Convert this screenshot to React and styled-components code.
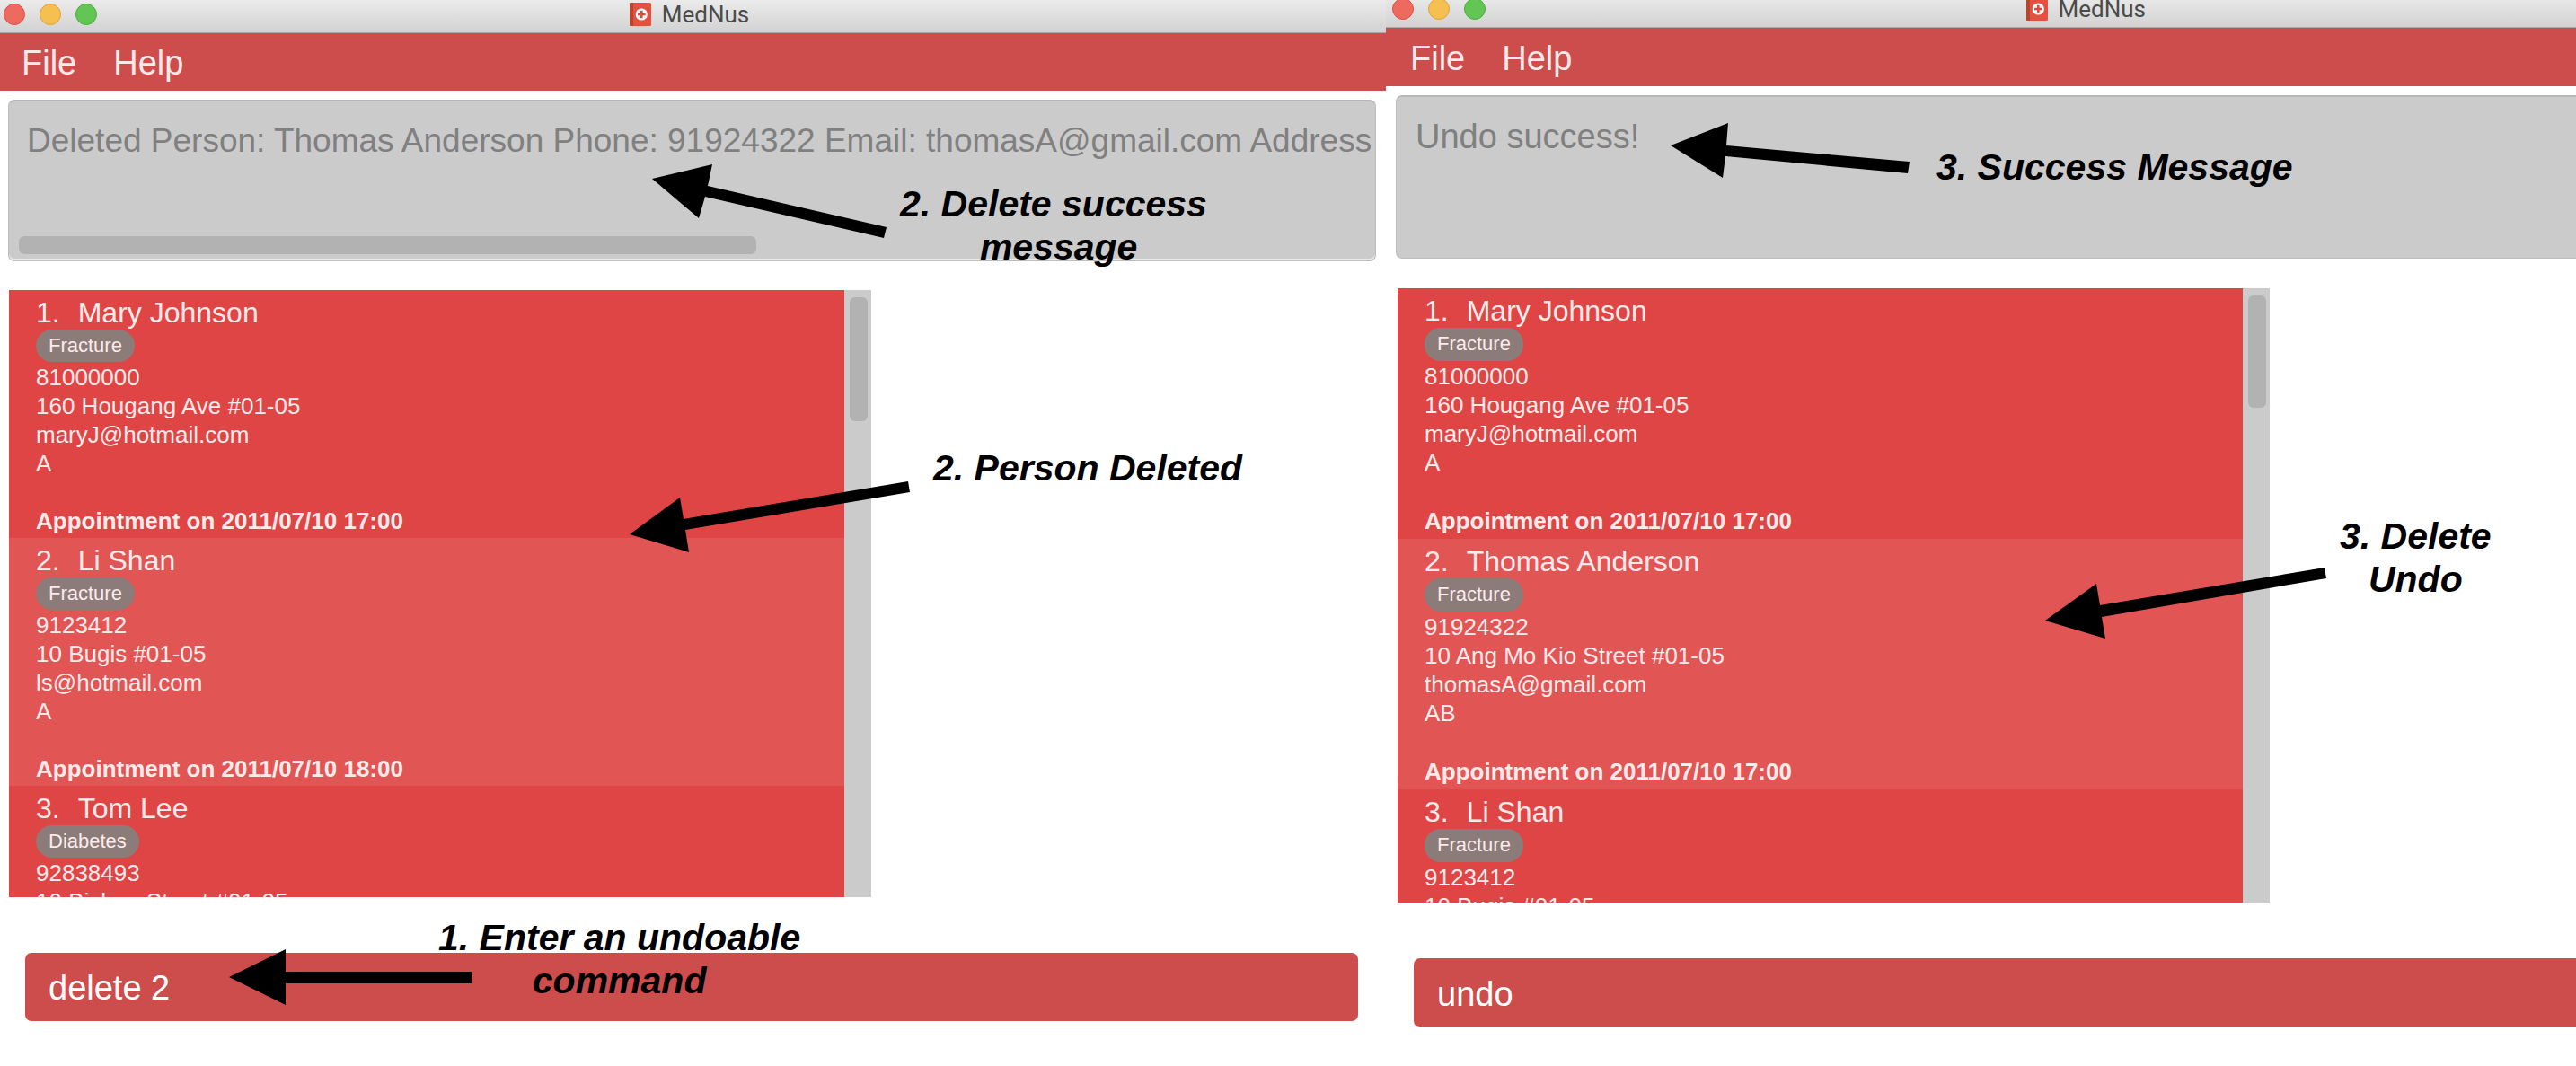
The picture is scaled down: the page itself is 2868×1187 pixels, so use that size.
import React from 'react';
import styled, { createGlobalStyle } from 'styled-components';

const GlobalStyle = createGlobalStyle`
  *, *::before, *::after { box-sizing: border-box; }
  body {
    margin: 0;
    background: #fff;
    font-family: 'Liberation Sans', Arial, Helvetica, sans-serif;
  }
  p, ol { margin: 0; padding: 0; }
`;

const Page = styled.main`
  position: relative;
  display: grid;
  grid-template-columns: minmax(0, 1543fr) minmax(0, 1325fr);
  height: 100vh;
  overflow: hidden;
`;

const Window = styled.section`
  display: flex;
  flex-direction: column;
  min-height: 0;
  width: ${(p) => (p.$cropped ? '118%' : '100%')};
  margin-top: ${(p) => (p.$cropped ? '-6px' : '0')};
  padding-bottom: ${(p) => (p.$cropped ? '43px' : '50px')};
`;

const TitleBar = styled.header`
  flex: none;
  display: grid;
  grid-template-columns: 1fr auto 1fr;
  align-items: center;
  height: 37px;
  padding: 0 12px 5px ${(p) => (p.$cropped ? '7px' : '4px')};
  border-bottom: 1px solid #a9a9a9;
  background: linear-gradient(#ebebeb, #d2d2d2);
`;

const Lights = styled.div`
  display: flex;
  gap: 16px;
`;

const Light = styled.button`
  width: 24px;
  height: 24px;
  padding: 0;
  border: 1px solid ${(p) => p.$edge};
  border-radius: 50%;
  background: ${(p) => p.$fill};
`;

const Title = styled.div`
  display: flex;
  align-items: center;
  gap: 12px;
  font: 26px/30px Roboto, sans-serif;
  color: #4b4b4b;
`;

const MenuBar = styled.nav`
  flex: none;
  display: flex;
  align-items: center;
  gap: 41px;
  height: ${(p) => (p.$cropped ? '65px' : '64px')};
  padding: 2px 0 0 ${(p) => (p.$cropped ? '27px' : '24px')};
  background: #cd4d4c;
`;

const MenuButton = styled.button`
  padding: 0;
  border: 0;
  background: none;
  color: #fbe9e9;
  font: inherit;
  font-size: 38px;
  line-height: 44px;
`;

const Result = styled.div`
  flex: none;
  display: flex;
  flex-direction: column;
  height: ${(p) => (p.$cropped ? '182px' : '180px')};
  margin: 10px 11px 0 ${(p) => (p.$cropped ? '11px' : '9px')};
  padding: 22px 0 7px;
  border: 1px solid #bdbdbd;
  border-top: 2px solid #b7b7b7;
  border-radius: 7px;
  background: #cbcbcb;
  box-shadow: ${(p) => (p.$cropped ? 'none' : 'inset 0 -2px 0 #e8e8e8')};
`;

const ResultText = styled.textarea`
  flex: 1;
  min-height: 0;
  width: 100%;
  padding: 0 0 0 ${(p) => (p.$cropped ? '21px' : '20px')};
  border: 0;
  outline: 0;
  resize: none;
  overflow: hidden;
  white-space: pre;
  background: transparent;
  color: #808080;
  font: inherit;
  font-size: ${(p) => (p.$cropped ? '38px' : '37px')};
  line-height: 44px;
`;

const HorizontalThumb = styled.div`
  flex: none;
  width: 54%;
  height: 20px;
  margin-left: 11px;
  border-radius: 6px;
  background: #b2b2b2;
`;

const PersonPanel = styled.div`
  flex: 1;
  display: flex;
  min-height: 0;
  width: ${(p) => (p.$cropped ? '62.1%' : '62.2%')};
  margin: ${(p) => (p.$cropped ? '33px 0 0 13px' : '32px 0 0 10px')};
`;

const PersonList = styled.ol`
  flex: 1;
  overflow: hidden;
  list-style: none;
  background: #df4544;
  color: #fdeaea;
`;

const ScrollTrack = styled.div`
  flex: none;
  width: 30px;
  padding: 8px 4px 0 6px;
  background: #cbcbcb;
`;

const ScrollThumb = styled.div`
  height: ${(p) => (p.$cropped ? '125px' : '138px')};
  border-radius: 6px;
  background: #b2b2b2;
`;

const Card = styled.li`
  display: flex;
  flex-direction: column;
  align-items: flex-start;
  padding: 7px 0 ${(p) => (p.$cropped ? '4px' : '3px')} 30px;
  font-size: 26px;
  line-height: 32px;

  &:nth-child(even) { background: #e15554; }
`;

const Name = styled.div`
  display: flex;
  gap: 20px;
  font-size: 32px;
  line-height: 36px;
`;

const Tag = styled.span`
  height: ${(p) => (p.$cropped ? '37px' : '36px')};
  margin: 1px 0;
  padding: 0 14px;
  border-radius: 18px;
  background: #8b7c7a;
  font-size: 22px;
  line-height: 36px;
`;

const Appointment = styled.p`
  margin-top: ${(p) => (p.$cropped ? '33px' : '32px')};
  font-weight: bold;
`;

const CommandInput = styled.input`
  flex: none;
  height: ${(p) => (p.$cropped ? '77px' : '76px')};
  margin: 62px 31px 0 ${(p) => (p.$cropped ? '31px' : '28px')};
  padding: 3px 26px 0;
  border: 0;
  outline: 0;
  border-radius: 7px;
  background: #cd4d4c;
  color: #fff;
  font: inherit;
  font-size: 38px;
`;

const Caption = styled.p`
  position: absolute;
  left: ${(p) => p.$x}px;
  top: ${(p) => p.$y}px;
  color: #000;
  font-size: 41px;
  font-style: italic;
  font-weight: bold;
  line-height: 48px;
  text-align: center;
  white-space: pre;
`;

const ArrowLayer = styled.svg`
  position: absolute;
  left: 0;
  top: 0;
  pointer-events: none;
`;

function AppIcon() {
  return (
    <svg width="24" height="26" viewBox="0 0 24 26" aria-hidden="true">
      <rect width="24" height="26" rx="1.5" fill="#e55140" />
      <path d="M1.5 0H4v26H1.5A1.5 1.5 0 0 1 0 24.500V1.500A1.5 1.500 0 0 1 1.500 0z" fill="#b8452c" />
      <circle cx="13.300" cy="13" r="6.600" fill="#fff" />
      <path d="M13.300 8.700v8.600M9 13h8.600" stroke="#e04a39" strokeWidth="2.600" />
    </svg>
  );
}

function AppWindow({ cropped, message, scrollable, people, command, name }) {
  return (
    <Window $cropped={cropped}>
      <TitleBar $cropped={cropped}>
        <Lights>
          <Light aria-label="Close" $fill="#ee6a5f" $edge="#dd5248" />
          <Light aria-label="Minimize" $fill="#f6c050" $edge="#dca43c" />
          <Light aria-label="Zoom" $fill="#62c554" $edge="#4ead3d" />
        </Lights>
        <Title><AppIcon />MedNus</Title>
      </TitleBar>
      <MenuBar $cropped={cropped}>
        <MenuButton>File</MenuButton>
        <MenuButton>Help</MenuButton>
      </MenuBar>
      <Result $cropped={cropped}>
        <ResultText $cropped={cropped} readOnly wrap="off" aria-label={`${name} result`} value={message} />
        {scrollable && <HorizontalThumb />}
      </Result>
      <PersonPanel $cropped={cropped}>
        <PersonList>
          {people.map((person, i) => (
            <Card key={person.name} $cropped={cropped}>
              <Name><span>{i + 1}.</span><span>{person.name}</span></Name>
              <Tag $cropped={cropped}>{person.tag}</Tag>
              <p>{person.phone}</p>
              <p>{person.address}</p>
              {person.email && <p>{person.email}</p>}
              {person.blood && <p>{person.blood}</p>}
              {person.time && (
                <Appointment $cropped={cropped}>Appointment on {person.time}</Appointment>
              )}
            </Card>
          ))}
        </PersonList>
        <ScrollTrack><ScrollThumb $cropped={cropped} /></ScrollTrack>
      </PersonPanel>
      <CommandInput $cropped={cropped} aria-label={`${name} command`} defaultValue={command} />
    </Window>
  );
}

const mary = {
  name: 'Mary Johnson', tag: 'Fracture', phone: '81000000',
  address: '160 Hougang Ave #01-05', email: 'maryJ@hotmail.com', blood: 'A',
  time: '2011/07/10 17:00',
};
const liShan = {
  name: 'Li Shan', tag: 'Fracture', phone: '9123412',
  address: '10 Bugis #01-05', email: 'ls@hotmail.com', blood: 'A',
  time: '2011/07/10 18:00',
};
const thomas = {
  name: 'Thomas Anderson', tag: 'Fracture', phone: '91924322',
  address: '10 Ang Mo Kio Street #01-05', email: 'thomasA@gmail.com', blood: 'AB',
  time: '2011/07/10 17:00',
};
const tom = {
  name: 'Tom Lee', tag: 'Diabetes', phone: '92838493', address: '10 Bishan Street #01-05',
};
const liShanPartial = {
  name: 'Li Shan', tag: 'Fracture', phone: '9123412', address: '10 Bugis #01-05',
};

const arrows = [
  '726,199 793,183 788,207 987,253 984,265 785,219 778,243',
  '701,595 757,554 761,578 1011,536 1013,548 763,590 767,615',
  '255,1088 318,1057 318,1082 525,1082 525,1095 318,1095 318,1119',
  '1860,162 1924,137 1922,162 2126,180 2124,193 1921,174 1918,198',
  '2277,691 2334,650 2338,674 2588,632 2590,644 2340,687 2344,711',
];

export default function App() {
  return (
    <>
      <GlobalStyle />
      <Page>
        <AppWindow
          name="Delete"
          message="Deleted Person: Thomas Anderson Phone: 91924322 Email: thomasA@gmail.com Address"
          scrollable
          people={[mary, liShan, tom]}
          command="delete 2"
        />
        <AppWindow
          cropped
          name="Undo"
          message="Undo success!"
          people={[mary, thomas, liShanPartial]}
          command="undo"
        />
        <ArrowLayer width="2868" height="1187" viewBox="0 0 2868 1187" aria-hidden="true">
          {arrows.map((points) => <polygon key={points} points={points} />)}
        </ArrowLayer>
        <Caption $x={1002} $y={203}>{'2. Delete success \nmessage'}</Caption>
        <Caption $x={1039} $y={497}>2. Person Deleted</Caption>
        <Caption $x={488} $y={1020}>{'1. Enter an undoable\ncommand'}</Caption>
        <Caption $x={2156} $y={162}>3. Success Message</Caption>
        <Caption $x={2605} $y={573}>{'3. Delete\nUndo'}</Caption>
      </Page>
    </>
  );
}
